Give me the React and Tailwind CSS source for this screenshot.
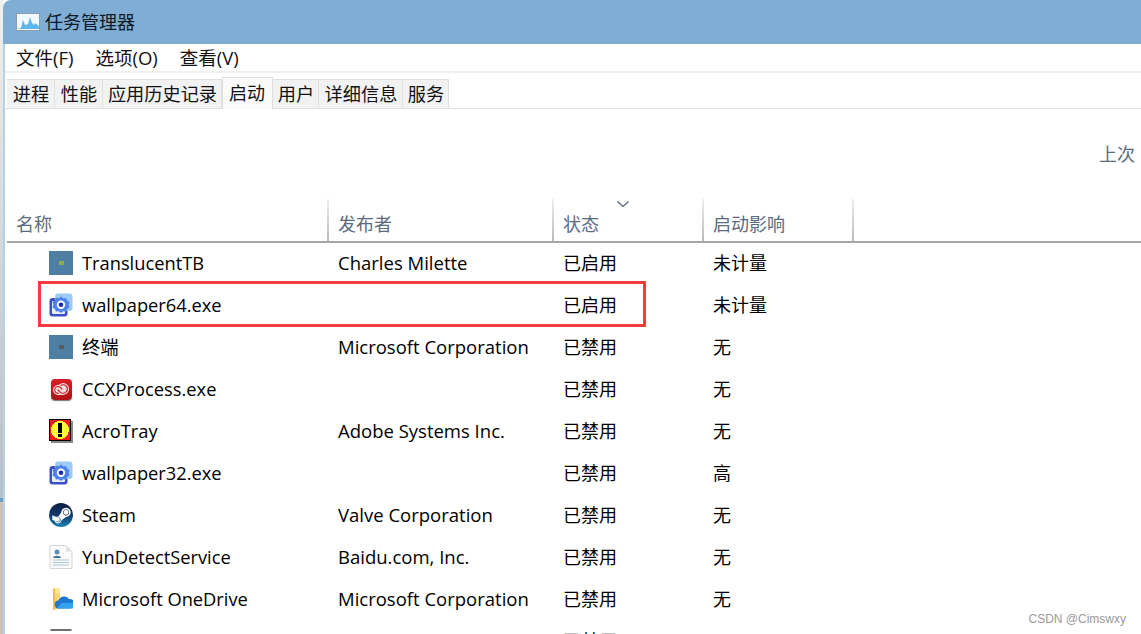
import { FaSteamSymbol } from 'react-icons/fa';
import { SiAdobecreativecloud } from 'react-icons/si';

const MENUS = ['文件(F)', '选项(O)', '查看(V)'];
const TABS = [
  { label: '进程', w: 'w-[48px]' },
  { label: '性能', w: 'w-[48px]' },
  { label: '应用历史记录', w: 'w-[119px]' },
  { label: '启动', w: 'w-[51px]', active: true },
  { label: '用户', w: 'w-[46px]' },
  { label: '详细信息', w: 'w-[84px]' },
  { label: '服务', w: 'w-[46px]' },
];

const WallpaperIcon = () => (
  <svg viewBox="0 0 24 24" className="w-6 h-6">
    <rect x="0.500" y="5" width="18" height="18.500" rx="3" fill="#3c4fc4" />
    <rect x="3" y="8" width="13" height="13" rx="1" fill="#e8eefb" />
    <rect x="6" y="0.500" width="17.500" height="17.500" rx="3" fill="#9cccf6" />
    <path d="M12 3.500l2.200 1.700 2.800-.3 1.100 2.600 2.400 1.500-.8 2.700.8 2.700-2.400 1.500-1.100 2.600-2.800-.3-2.200 1.700-2.200-1.700-2.800.3-1.100-2.600-2.400-1.500.8-2.700-.8-2.700 2.400-1.500 1.100-2.600 2.800.3z" fill="#4f82e6" />
    <circle cx="12" cy="11.700" r="4.200" fill="#fff" />
    <circle cx="12" cy="11.700" r="2.300" fill="#1a2cae" />
  </svg>
);

const TileIcon = ({ dot }) => (
  <div className="w-6 h-6 bg-[#4f7ea3] flex items-center justify-center">
    <div className={`w-[5px] h-[4px] ${dot}`} />
  </div>
);

const CloudIcon = () => (
  <div className="w-6 h-6 flex items-center justify-center">
    <div className="w-[21px] h-[21px] rounded-[4px] bg-gradient-to-b from-[#d81f26] to-[#b01217] shadow-[0_1px_1px_#777] flex items-center justify-center">
      <SiAdobecreativecloud size={16} color="#f6dcdc" />
    </div>
  </div>
);

const AcroTrayIcon = () => (
  <svg viewBox="0 0 24 24" className="w-6 h-6" shapeRendering="crispEdges">
    <defs>
      <pattern id="dither" width="2" height="2" patternUnits="userSpaceOnUse">
        <rect width="2" height="2" fill="#f8f82c" />
        <rect width="1" height="1" fill="#fff" />
      </pattern>
    </defs>
    <rect x="2" y="2" width="22" height="22" fill="#888" />
    <rect x="0" y="0" width="22" height="22" fill="#000" />
    <rect x="1" y="1" width="20" height="20" fill="#ee1c1c" />
    <circle cx="11" cy="11" r="9" fill="url(#dither)" />
    <rect x="9" y="4" width="4" height="10" fill="#000" />
    <rect x="9" y="15" width="4" height="3" fill="#000" />
  </svg>
);

const SteamIcon = () => (
  <div className="w-6 h-6 rounded-full bg-gradient-to-b from-[#0d1c3f] via-[#123a6e] to-[#1b83b4] flex items-center justify-center">
    <FaSteamSymbol size={21} color="#fff" />
  </div>
);

const DocIcon = () => (
  <svg viewBox="0 0 24 24" className="w-6 h-6">
    <path d="M1 0.500h16l6 6v17H1z" fill="#fbfbfb" stroke="#d4d4d4" />
    <path d="M17 0.500v6h6z" fill="#e0e0e0" />
    <circle cx="8" cy="7" r="2.500" fill="#5d8fb5" />
    <path d="M4 13c0-3 8-3 8 0z" fill="#41749f" />
    <path d="M4 15h16M4 17.500h16M4 20h16" stroke="#a9c5dc" strokeWidth="1.200" />
  </svg>
);

const OneDriveIcon = () => (
  <svg viewBox="0 0 24 24" className="w-6 h-6">
    <path d="M4 1.500l7 0v20l-7 1.500z" fill="#f7d774" />
    <path d="M4 1.500l7 0v5l-7 0z" fill="#fbe59c" />
    <path d="M4 1.500v21.500l2-.5V2z" fill="#eebc4a" />
    <path d="M10 21.500a4 4 0 0 1-.5-8 6 6 0 0 1 10.500-1.500 4.500 4.500 0 0 1 1.500 9.500z" fill="#1e78d2" />
    <path d="M8 21.500h15.500a3 3 0 0 0-3-5.500l-8 0z" fill="#35a2ee" />
  </svg>
);

const MonitorIcon = () => (
  <svg viewBox="0 0 24 24" className="w-6 h-6">
    <path d="M1.500 1h21" stroke="#707070" strokeWidth="2" />
  </svg>
);

const ROWS = [
  { name: 'TranslucentTB', publisher: 'Charles Milette', status: '已启用', impact: '未计量', icon: <TileIcon dot="bg-[#8cae4a]" /> },
  { name: 'wallpaper64.exe', publisher: '', status: '已启用', impact: '未计量', icon: <WallpaperIcon /> },
  { name: '终端', publisher: 'Microsoft Corporation', status: '已禁用', impact: '无', icon: <TileIcon dot="bg-[#555b63]" /> },
  { name: 'CCXProcess.exe', publisher: '', status: '已禁用', impact: '无', icon: <CloudIcon /> },
  { name: 'AcroTray', publisher: 'Adobe Systems Inc.', status: '已禁用', impact: '无', icon: <AcroTrayIcon /> },
  { name: 'wallpaper32.exe', publisher: '', status: '已禁用', impact: '高', icon: <WallpaperIcon /> },
  { name: 'Steam', publisher: 'Valve Corporation', status: '已禁用', impact: '无', icon: <SteamIcon /> },
  { name: 'YunDetectService', publisher: 'Baidu.com, Inc.', status: '已禁用', impact: '无', icon: <DocIcon /> },
  { name: 'Microsoft OneDrive', publisher: 'Microsoft Corporation', status: '已禁用', impact: '无', icon: <OneDriveIcon /> },
  { name: '', publisher: '', status: '已禁用', impact: '', icon: <MonitorIcon /> },
];

const COLUMNS = [
  { label: '名称', w: 'w-[322px]', pl: 'pl-[9px]' },
  { label: '发布者', w: 'w-[225px]', pl: 'pl-[9px]' },
  { label: '状态', w: 'w-[150px]', pl: 'pl-[9px]', sorted: true },
  { label: '启动影响', w: 'w-[150px]', pl: 'pl-[9px]' },
];

const Row = ({ row }) => (
  <div className="h-[42px] shrink-0 flex items-center text-[18px] text-black">
    <div className="w-[324px] flex items-center pl-[44px] gap-[9px] text-[18.3px]">
      {row.icon}
      <span>{row.name}</span>
    </div>
    <div className="w-[225px] pl-[9px] text-[18.5px]">{row.publisher}</div>
    <div className="w-[150px] pl-[9px]">{row.status}</div>
    <div className="pl-[9px]">{row.impact}</div>
  </div>
);

export default function App() {
  return (
    <div className="relative w-[1141px] h-[634px] overflow-hidden bg-white flex font-['Open_Sans','Noto_Sans_CJK_SC',sans-serif]">
      <div className="w-[3px] shrink-0 flex flex-col">
        <div className="h-[498px] bg-gradient-to-b from-[#f0f0f0] to-[#b4c0ca]" />
        <div className="h-[4px] bg-[#6d9fc6]" />
        <div className="flex-1 bg-[#c9c5bd]" />
      </div>

      <div className="flex-1 min-w-0 flex flex-col rounded-tl-[8px] overflow-hidden">
        <div className="h-[44px] shrink-0 bg-[#7fadd3] flex items-center pl-[13px] gap-[5px] text-[18px] text-[#0b1a2a]">
          <svg viewBox="0 0 24 18" className="w-6 h-[18px]">
            <rect x="0.500" y="0.500" width="23" height="17" fill="#f1f8fe" stroke="#8b9cab" />
            <path d="M1 16l4-1 2-8 2 5 3-1 2-7 2 6 2 2 1-2 4 3v3H1z" fill="#5fb6ee" />
          </svg>
          <span>任务管理器</span>
        </div>

        <div className="flex-1 min-h-0 flex flex-col border-l-2 border-[#b9cfe2]">
          <div className="h-[29px] shrink-0 flex items-center pl-[11px] gap-[22px] text-[18.5px] text-[#111] border-b-2 border-[#f0f0f0]">
            {MENUS.map((m) => <span key={m}>{m}</span>)}
          </div>

          <div className="h-[36px] shrink-0 flex items-end pl-[2px] border-b-[1px] border-[#dedede]">
            {TABS.map((t) =>
              t.active ? (
                <div key={t.label} className={`${t.w} h-[32px] -mb-[1px] shrink-0 flex items-center justify-center bg-[#fafafa] border border-b-0 border-[#dedede] text-[18px] text-[#111] pr-[1px]`}>{t.label}</div>
              ) : (
                <div key={t.label} className={`${t.w} h-[29px] shrink-0 flex items-center justify-center bg-[#f2f2f2] border-r border-t border-[#e0e0e0] text-[18.2px] text-[#111] pt-[2px] pl-[1px]`}>{t.label}</div>
              )
            )}
          </div>

          <div className="h-[32px] shrink-0" />
          <div className="h-[26px] shrink-0 flex justify-end items-center text-[18px] text-[#5d6b7a]">
            <span className="pr-[6px]">上次</span>
          </div>
          <div className="h-[32px] shrink-0" />

          <div className="h-[44px] shrink-0 flex border-b-2 border-[#a6a6a6] ml-[2px]">
            {COLUMNS.map((c) => (
              <div key={c.label} className={`${c.w} ${c.pl} relative flex items-end pb-[3px] text-[18px] text-[#5a6c80] border-r-2 border-transparent [border-image:linear-gradient(to_bottom,#f0f0f0,#b8b8b8)_1]`}>
                {c.sorted && (
                  <svg viewBox="0 0 12 6" className="absolute left-[63px] top-[2px] w-3 h-[6px]">
                    <path d="M0.500 0.500L6 5.500 11.500 0.500" fill="none" stroke="#5a6c80" strokeWidth="1.300" />
                  </svg>
                )}
                <span>{c.label}</span>
              </div>
            ))}
          </div>

          <div className="flex flex-col -mt-px">
            {ROWS.map((r, i) => <Row key={i} row={r} />)}
          </div>
        </div>
      </div>

      <div className="absolute left-[38px] top-[281px] w-[608px] h-[46px] border-[3px] border-[#f43c3c]" />
      <div className="absolute right-[15px] top-[610px] text-[12px] text-[#9a9a9a] font-['Liberation_Sans',sans-serif]">CSDN @Cimswxy</div>
    </div>
  );
}
